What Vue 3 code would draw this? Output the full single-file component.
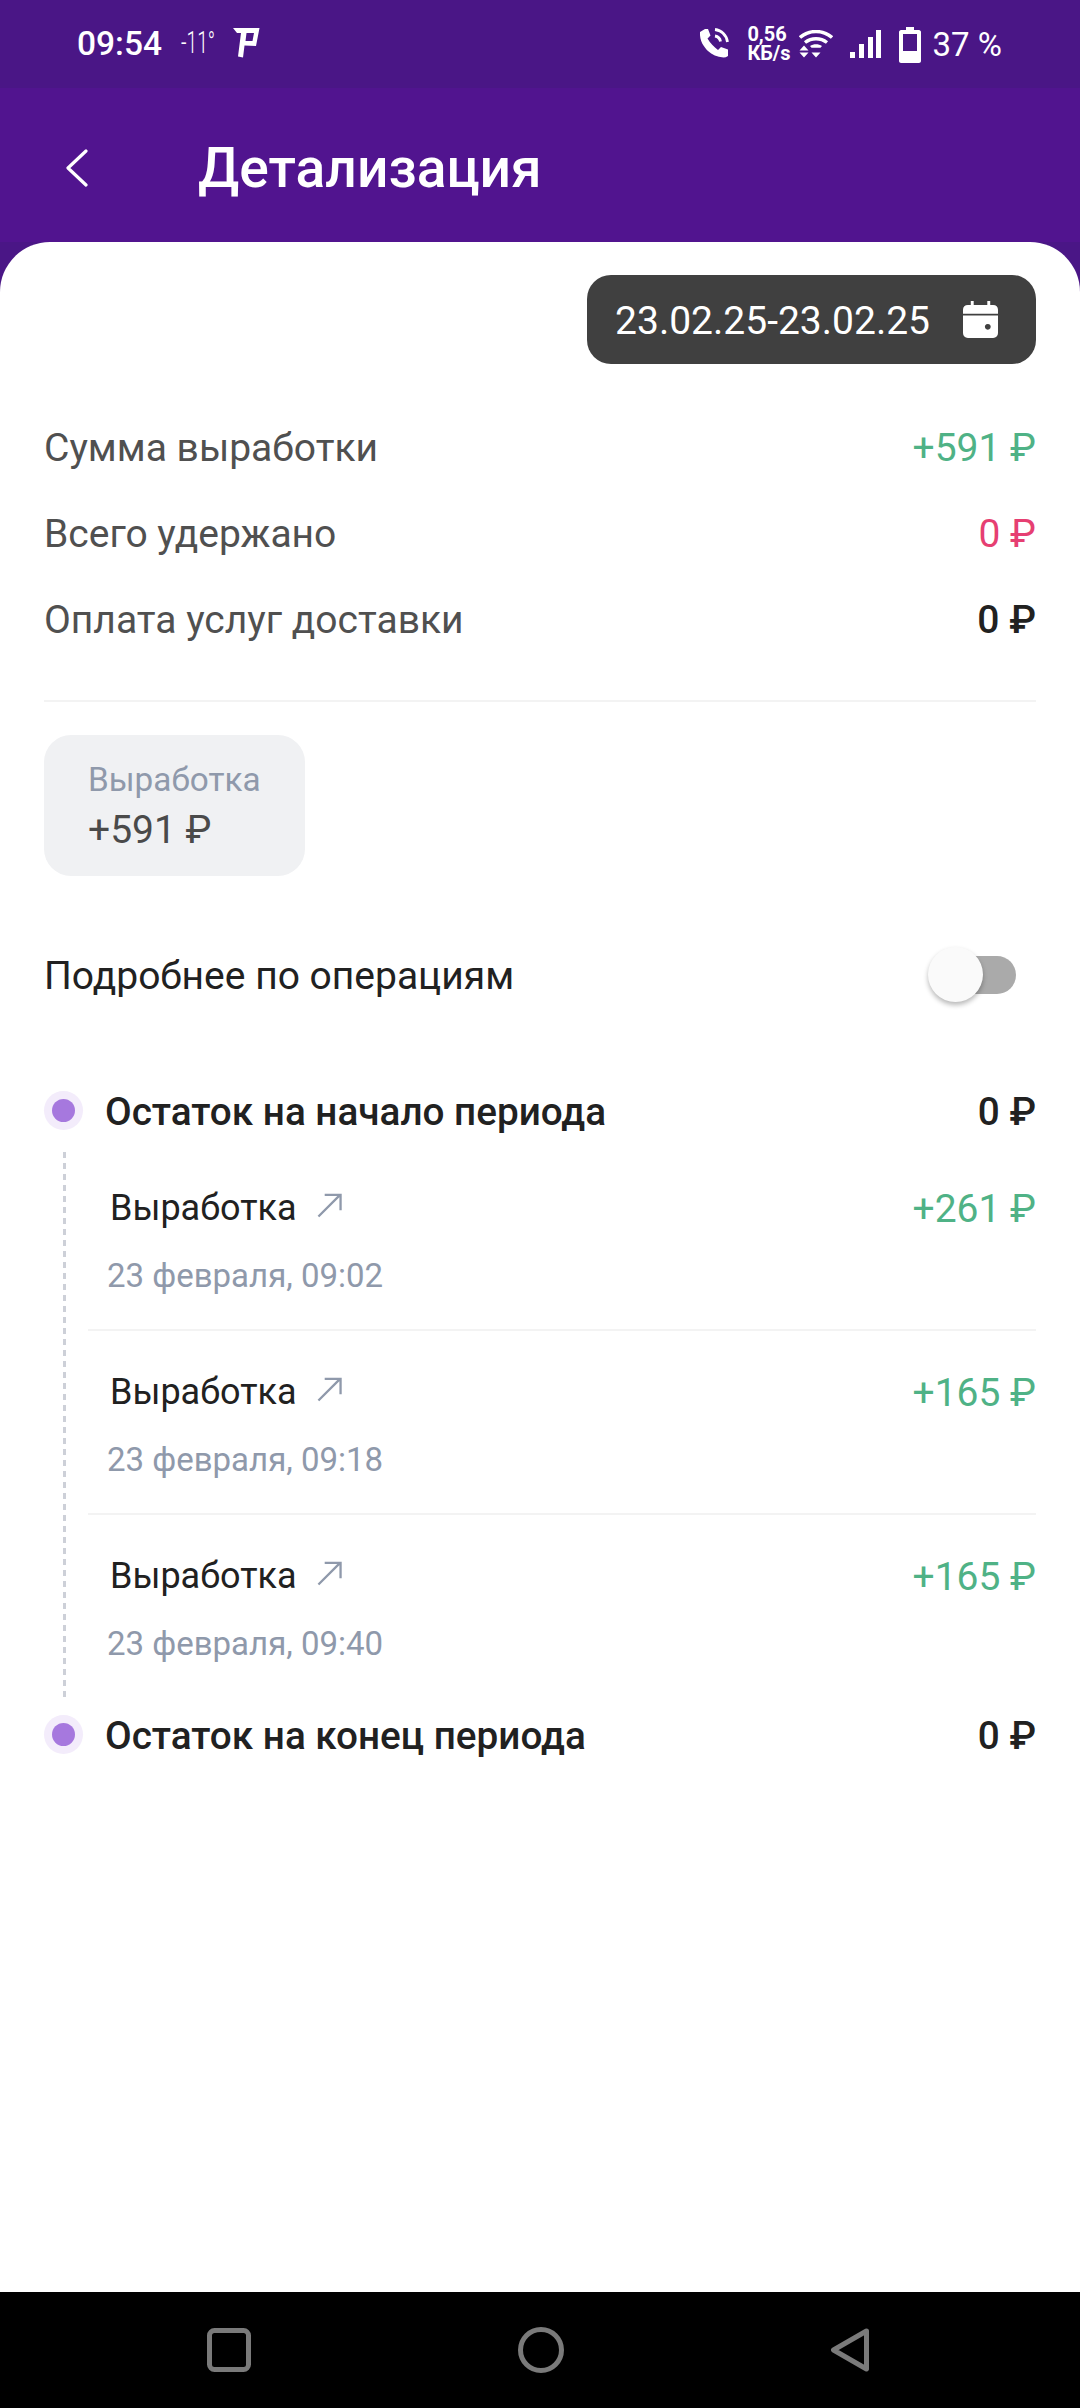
<script setup>
const summary = [
  { label: 'Сумма выработки', value: '+591 ₽', tone: 'green' },
  { label: 'Всего удержано', value: '0 ₽', tone: 'red' },
  { label: 'Оплата услуг доставки', value: '0 ₽', tone: 'dark' }
]

const operations = [
  { title: 'Выработка', date: '23 февраля, 09:02', value: '+261 ₽' },
  { title: 'Выработка', date: '23 февраля, 09:18', value: '+165 ₽' },
  { title: 'Выработка', date: '23 февраля, 09:40', value: '+165 ₽' }
]
</script>

<template>
  <div class="screen">
    <div class="status">
      <div class="status__left">
        <span class="status__time">09:54</span>
        <span class="status__temp">-11°</span>
        <svg class="status__logo" viewBox="0 0 27 31" width="27" height="31">
          <path fill="#fff" fill-rule="evenodd" d="M0 1H26.500L23 19 11.500 18.500 10 30.500 5 29.500 8 6H4Z M13.500 6 12.500 14H19.500L21 6Z" />
        </svg>
      </div>
      <div class="status__right">
        <svg class="ic-phone" viewBox="0 0 30 30" width="30" height="30">
          <path fill="#fff" d="M6 1 1 4c-.6 9 4 15 8 19 4 3.500 9 6 15.500 6.500 1.500 0 3-.5 4.500-1.500v-6.500l-7-2.500-3 3C15 19 11 15 8.500 10.500l3-3L9 1Z" />
          <path fill="none" stroke="#fff" stroke-width="2.800" d="M16 8c3 .5 5 2.500 5.500 5.500M16 1.500c6.500 .8 11.500 5.500 12.500 12.500" />
        </svg>
        <div class="status__speed">0,56<br>КБ/s</div>
        <svg class="ic-wifi" viewBox="0 0 34 28" width="34" height="28">
          <path fill="none" stroke="#fff" stroke-width="3.400" d="M1 7.500C10-.5 24-.5 33 7.500M6 12.500c6.500-5 15.500-5 22 0" />
          <path fill="#fff" d="M11 16c3.500-2.500 8.500-2.500 12 0l-1.500 1.800h-9Z" />
          <path fill="#fff" d="M5 15.500 9.500 20.500H.5ZM.5 22.500h9L5 27.500ZM17 27.500 12.500 22.500h9Z" />
        </svg>
        <svg class="ic-signal" viewBox="0 0 31 28" width="31" height="28">
          <path fill="#fff" d="M0 22h5v6H0ZM9 14h5v14H9ZM18 7h5v21h-5ZM26 0h5v28h-5Z" />
        </svg>
        <svg class="ic-battery" viewBox="0 0 22 36" width="22" height="36">
          <path fill="#fff" fill-rule="evenodd" d="M7 0h8v3h5c1 0 2 1 2 2v29c0 1-1 2-2 2H2c-1 0-2-1-2-2V5c0-1 1-2 2-2h5Z M4 7v17h14V7Z" />
        </svg>
        <span class="status__battery">37 %</span>
      </div>
    </div>

    <div class="header">
      <svg class="back" viewBox="0 0 24 38" width="24" height="38">
        <path fill="none" stroke="#fff" stroke-width="3.200" stroke-linecap="round" stroke-linejoin="round" d="M21 2 3 19l18 17" />
      </svg>
      <h1 class="header__title">Детализация</h1>
    </div>

    <div class="card">
      <div class="date-row">
        <div class="date-btn">
          <span class="date-btn__text">23.02.25-23.02.25</span>
          <svg viewBox="0 0 36 38" width="35" height="37">
            <path fill="#fff" fill-rule="evenodd" d="M8 0h3v4h14V0h3v4h3c3 0 5 2 5 5v4H0V9c0-3 2-5 5-5h3ZM0 15h36v18c0 3-2 5-5 5H5c-3 0-5-2-5-5Z M25.500 23.500a3 3 0 1 0 .01 0Z" />
          </svg>
        </div>
      </div>

      <div class="summary">
        <div class="summary__row" v-for="row in summary" :key="row.label">
          <span class="summary__label">{{ row.label }}</span>
          <span :class="['summary__value', row.tone]">{{ row.value }}</span>
        </div>
      </div>

      <div class="divider"></div>

      <div class="chip">
        <span class="chip__label">Выработка</span>
        <span class="chip__value">+591 ₽</span>
      </div>

      <div class="details">
        <span>Подробнее по операциям</span>
        <div class="switch"><div class="switch__thumb"></div></div>
      </div>

      <div class="balance balance--start">
        <span class="dot"></span>
        <span class="balance__title">Остаток на начало периода</span>
        <span class="balance__value">0 ₽</span>
      </div>

      <div class="timeline">
        <div class="operation" v-for="op in operations" :key="op.date">
          <div class="operation__top">
            <span class="operation__title">{{ op.title }}</span>
            <svg class="operation__arrow" viewBox="0 0 26 26" width="25" height="25">
              <path fill="none" stroke="#8f99ab" stroke-width="2.400" d="M1.500 24.500 24 2M8 2h16.500v16" />
            </svg>
            <span class="operation__value">{{ op.value }}</span>
          </div>
          <div class="operation__date">{{ op.date }}</div>
        </div>
      </div>

      <div class="balance">
        <span class="dot"></span>
        <span class="balance__title">Остаток на конец периода</span>
        <span class="balance__value">0 ₽</span>
      </div>
    </div>

    <div class="nav">
      <svg viewBox="0 0 44 44" width="44" height="44">
        <rect x="2.500" y="2.500" width="39" height="39" rx="5" fill="none" stroke="#7a7a7a" stroke-width="5" />
      </svg>
      <svg viewBox="0 0 46 46" width="46" height="46">
        <circle cx="23" cy="23" r="20.500" fill="none" stroke="#7a7a7a" stroke-width="5" />
      </svg>
      <svg viewBox="0 0 40 44" width="40" height="44">
        <path fill="none" stroke="#7a7a7a" stroke-width="5" stroke-linejoin="round" d="M36.500 3 3.500 22l33 19Z" />
      </svg>
    </div>
  </div>
</template>

<style scoped>
.screen {
  width: 1080px;
  height: 2408px;
  display: flex;
  flex-direction: column;
  background: #4a1686;
  font-family: Roboto, "Noto Sans", sans-serif;
  color: #212121;
  overflow: hidden;
}

/* status bar */
.status {
  height: 88px;
  flex: none;
  display: flex;
  align-items: center;
  justify-content: space-between;
  padding: 0 78px 0 77px;
  color: #fff;
  box-sizing: border-box;
}
.status__left,
.status__right {
  display: flex;
  align-items: center;
}
.status__time {
  font-size: 33.500px;
  font-weight: 500;
  line-height: 40px;
}
.status__temp {
  display: inline-block;
  margin: -2px -20px 0 19px;
  font-size: 31px;
  font-weight: 300;
  line-height: 40px;
  transform: scaleX(0.62);
  transform-origin: left center;
}
.status__logo {
  margin-left: 17px;
  margin-top: -3px;
}
.status__speed {
  margin-left: 18px;
  font-size: 20px;
  font-weight: 700;
  line-height: 19px;
}
.ic-phone { margin-top: -2px; }
.ic-wifi { margin-left: 8px; margin-top: -1px; }
.ic-signal { margin-left: 17px; margin-top: -1px; }
.ic-battery { margin-left: 18px; margin-top: 1px; }
.status__battery {
  margin-left: 12px;
  font-size: 33px;
  line-height: 40px;
  margin-top: 1px;
}

/* header */
.header {
  height: 154px;
  flex: none;
  display: flex;
  align-items: center;
  padding: 6px 0 0 65px;
  background: #51148f;
  box-sizing: border-box;
}
.back {
  flex: none;
}
.header__title {
  margin: 0 0 0 109px;
  font-size: 55.200px;
  font-weight: 500;
  line-height: 64px;
  color: #fff;
}

/* card */
.card {
  flex: 1;
  display: flex;
  flex-direction: column;
  padding: 33px 44px 0;
  background: #fff;
  border-radius: 50px 50px 0 0;
}
.date-row {
  display: flex;
  justify-content: flex-end;
}
.date-btn {
  display: flex;
  align-items: center;
  gap: 33px;
  height: 89px;
  padding: 0 38px 0 28px;
  border-radius: 24px;
  background: #404040;
  color: #fff;
  font-size: 39px;
  box-sizing: border-box;
}
.date-btn__text {
  margin-top: 2px;
}
.summary {
  margin-top: 41px;
}
.summary__row {
  display: flex;
  justify-content: space-between;
  align-items: center;
  height: 86px;
  font-size: 39px;
}
.summary__label {
  color: #505050;
}
.green { color: #4fb286; }
.red { color: #e63f72; }
.dark { color: #212121; font-weight: 500; }

.divider {
  height: 2px;
  margin-top: 37px;
  background: #f3f3f3;
}

.chip {
  align-self: flex-start;
  display: flex;
  flex-direction: column;
  width: 261px;
  height: 141px;
  margin-top: 33px;
  padding: 22px 0 0 44px;
  border-radius: 27px;
  background: #f0f1f3;
  box-sizing: border-box;
}
.chip__label {
  font-size: 33.300px;
  line-height: 45px;
  color: #8f99ab;
}
.chip__value {
  margin-top: 3px;
  font-size: 39px;
  line-height: 50px;
  color: #4a4a4a;
}

.details {
  display: flex;
  justify-content: space-between;
  align-items: center;
  height: 56px;
  margin-top: 72px;
  font-size: 39px;
}
.switch {
  position: relative;
  width: 77px;
  height: 38px;
  margin-right: 20px;
  margin-top: -2px;
  border-radius: 19px;
  background: #aaa;
}
.switch__thumb {
  position: absolute;
  left: -11px;
  top: -9px;
  width: 55px;
  height: 55px;
  border-radius: 50%;
  background: #fafafa;
  box-shadow: 0 3px 5px rgba(0, 0, 0, 0.28);
}

.balance {
  display: flex;
  align-items: center;
  height: 39px;
  font-size: 38.700px;
  font-weight: 500;
}
.balance--start {
  margin-top: 87px;
}
.dot {
  width: 39px;
  height: 39px;
  flex: none;
  display: flex;
  align-items: center;
  justify-content: center;
  border-radius: 50%;
  background: #f3ecfb;
}
.dot::after {
  content: "";
  width: 23px;
  height: 23px;
  border-radius: 50%;
  background: #a678de;
}
.balance__title {
  margin: 2px 0 0 22px;
  flex: 1;
}
.balance__value {
  margin-top: 2px;
}

/* dashed line + operations */
.timeline {
  position: relative;
  margin-top: 17px;
  height: 568px;
  box-sizing: border-box;
  padding-left: 44px;
}
.timeline::before {
  content: "";
  position: absolute;
  left: 19px;
  top: 5px;
  bottom: 18px;
  width: 3px;
  background: repeating-linear-gradient(to bottom, #cdd0d8 0 6px, transparent 6px 11px);
}
.operation {
  height: 184px;
  box-sizing: border-box;
  border-bottom: 2px solid #f3f3f3;
  padding-top: 39px;
}
.operation:last-child {
  border-bottom: none;
}
.operation__top {
  display: flex;
  align-items: center;
  height: 44px;
  padding-left: 22px;
}
.operation__title {
  font-size: 36px;
}
.operation__arrow {
  margin-left: 20px;
  margin-top: -6px;
}
.operation__value {
  margin-left: auto;
  margin-top: 2px;
  font-size: 39px;
  color: #4fb286;
}
.operation__date {
  margin-top: 24px;
  padding-left: 19px;
  font-size: 33px;
  line-height: 44px;
  color: #8f99ab;
}

/* navigation bar */
.nav {
  height: 116px;
  flex: none;
  display: flex;
  align-items: center;
  justify-content: space-between;
  padding: 0 210px 0 207px;
  background: #000;
  box-sizing: border-box;
}
</style>
